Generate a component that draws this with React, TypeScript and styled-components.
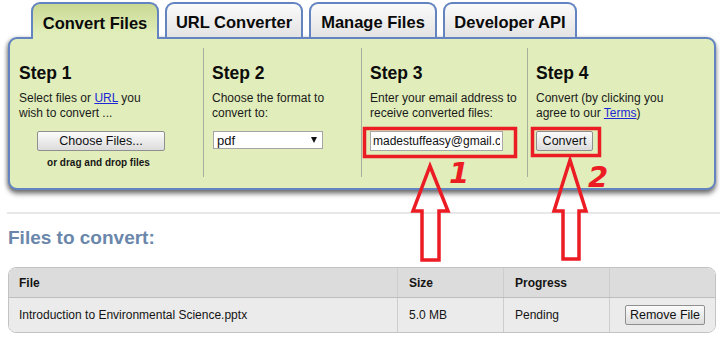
import React from "react";
import styled, { createGlobalStyle } from "styled-components";

const GlobalStyle = createGlobalStyle`
  html, body {
    margin: 0;
    padding: 0;
    background: #ffffff;
  }
  body {
    font-family: "Liberation Sans", Arial, sans-serif;
    color: #111;
  }
`;

const tabs = [
  { label: "Convert Files", width: 128, active: true },
  { label: "URL Converter", width: 138 },
  { label: "Manage Files", width: 128 },
  { label: "Developer API", width: 134 },
];

const App = () => (
  <Page>
    <GlobalStyle />
    <TabBar>
      {tabs.map(t => (
        <Tab key={t.label} $width={t.width} $active={!!t.active}>
          {t.label}
        </Tab>
      ))}
    </TabBar>

    <Panel>
      <Step $first>
        <StepTitle>Step 1</StepTitle>
        <StepText>
          Select files or <Link href="#">URL</Link> you
          <br />
          wish to convert ...
        </StepText>
        <ChooseArea>
          <GreyButton $width={128}>Choose Files...</GreyButton>
          <DropHint>or drag and drop files</DropHint>
        </ChooseArea>
      </Step>

      <Step>
        <StepTitle>Step 2</StepTitle>
        <StepText>
          Choose the format to
          <br />
          convert to:
        </StepText>
        <FormatSelect>
          <span>pdf</span>
          <SelectArrow />
        </FormatSelect>
      </Step>

      <Step>
        <StepTitle>Step 3</StepTitle>
        <StepText>
          Enter your email address to
          <br />
          receive converted files:
        </StepText>
        <EmailInput readOnly value="madestuffeasy@gmail.com" />
      </Step>

      <Step>
        <StepTitle>Step 4</StepTitle>
        <StepText>
          Convert (by clicking you
          <br />
          agree to our <Link href="#">Terms</Link>)
        </StepText>
        <GreyButton $width={57}>Convert</GreyButton>
      </Step>
    </Panel>

    <Rule />

    <SectionTitle>Files to convert:</SectionTitle>

    <FileTable>
      <Row $head>
        <Cell $head>File</Cell>
        <Cell $head>Size</Cell>
        <Cell $head>Progress</Cell>
        <Cell $head />
      </Row>
      <Row>
        <Cell>Introduction to Environmental Science.pptx</Cell>
        <Cell>5.0 MB</Cell>
        <Cell>Pending</Cell>
        <Cell $end>
          <GreyButton $width={80}>Remove File</GreyButton>
        </Cell>
      </Row>
    </FileTable>

    <Annotations width="720" height="345" viewBox="0 0 720 345">
      <g fill="none" stroke="#ec1c24" strokeWidth="3.5" strokeLinejoin="miter">
        <rect x="364.5" y="128.5" width="151" height="28" />
        <rect x="532.5" y="128.5" width="67" height="27" />
        <polygon points="430,166 448,211 439,211 439,260 422,260 422,211 413,211" />
        <polygon points="570,160 586,211 579,211 579,259 563,259 563,211 554,211" />
      </g>
      <HandNumber x="449" y="183">1</HandNumber>
      <HandNumber x="588" y="187">2</HandNumber>
    </Annotations>
  </Page>
);

// Styles

const Page = styled.div`
  position: relative;
  width: 720px;
  height: 345px;
  overflow: hidden;
  padding-left: 8px;
  box-sizing: border-box;
`;

const TabBar = styled.div`
  display: flex;
  align-items: flex-end;
  gap: 6px;
  height: 35px;
  margin-top: 2px;
  padding-left: 23px;
  position: relative;
  z-index: 2;
`;

const Tab = styled.div<{ $width: number; $active: boolean }>`
  box-sizing: border-box;
  width: ${p => p.$width}px;
  height: ${p => (p.$active ? 37 : 35)}px;
  margin-bottom: ${p => (p.$active ? -2 : 0)}px;
  padding-top: ${p => (p.$active ? 4 : 3)}px;
  display: flex;
  align-items: center;
  justify-content: center;
  border: 2px solid #6384c0;
  border-bottom: none;
  border-radius: 9px 9px 0 0;
  background: ${p =>
    p.$active
      ? "linear-gradient(#c9d992, #e1eebb 85%)"
      : "linear-gradient(#fbfbfb, #e3e3e3)"};
  font-size: 16.5px;
  font-weight: bold;
  color: #0a0a0a;
`;

const Panel = styled.div`
  position: relative;
  z-index: 1;
  box-sizing: border-box;
  width: 708px;
  display: grid;
  grid-template-columns: 193px 158px 166px 1fr;
  padding: 9px 0 11px;
  background: #e1eebb;
  border: 2px solid #6384c0;
  border-radius: 9px;
  box-shadow: 0 4px 5px rgba(0, 0, 0, 0.45), -1px 1px 4px rgba(0, 0, 0, 0.3);
`;

const Step = styled.div<{ $first?: boolean }>`
  height: 129px;
  padding-left: 8px;
  border-left: 1px solid ${p => (p.$first ? "transparent" : "#a9ae9c")};
`;

const StepTitle = styled.div`
  margin-top: 15px;
  font-size: 17.5px;
  line-height: 20px;
  font-weight: bold;
  color: #0c0c0c;
`;

const StepText = styled.div`
  margin-top: 8px;
  font-size: 12px;
  line-height: 15px;
  color: #1a1a1a;
  height: 30px;
  margin-bottom: 10px;
`;

const Link = styled.a`
  color: #1d27d6;
  text-decoration: underline;
`;

const ChooseArea = styled.div`
  width: 128px;
  margin-left: 18px;
  display: flex;
  flex-direction: column;
  align-items: center;
`;

const GreyButton = styled.button<{ $width: number }>`
  box-sizing: border-box;
  width: ${p => p.$width}px;
  height: 20px;
  padding: 0;
  font-family: "Liberation Sans", Arial, sans-serif;
  font-size: 12.5px;
  color: #111;
  background: linear-gradient(#fbfbfb, #dcdcdc);
  border: 1px solid #8f8f8f;
  border-radius: 2px;
`;

const DropHint = styled.div`
  margin-top: 6px;
  font-size: 10px;
  line-height: 12px;
  font-weight: bold;
  color: #161616;
  margin-left: -5px;
`;

const FormatSelect = styled.div`
  box-sizing: border-box;
  width: 110px;
  height: 18px;
  margin-left: 1px;
  display: flex;
  align-items: center;
  justify-content: space-between;
  padding: 0 5px 0 3px;
  background: #fff;
  border: 1px solid #a5a5a5;
  font-size: 13px;
`;

const SelectArrow = styled.span`
  width: 0;
  height: 0;
  border-left: 3.5px solid transparent;
  border-right: 3.5px solid transparent;
  border-top: 6px solid #111;
`;

const EmailInput = styled.input`
  box-sizing: border-box;
  width: 133px;
  height: 20px;
  padding: 0 2px;
  font-family: "Liberation Sans", Arial, sans-serif;
  font-size: 12px;
  color: #111;
  background: #fff;
  border: 1px solid #a9a9a9;
  outline: none;
`;

const Rule = styled.div`
  height: 2px;
  margin: 22px 0 0 -1px;
  background: #e8e8e8;
`;

const SectionTitle = styled.h2`
  margin: 14px 0 0;
  font-size: 19px;
  line-height: 20px;
  font-weight: bold;
  color: #6a87ab;
`;

const FileTable = styled.div`
  box-sizing: border-box;
  width: 708px;
  margin-top: 19px;
  border: 1px solid #c3c3c3;
  border-radius: 8px;
  overflow: hidden;
`;

const Row = styled.div<{ $head?: boolean }>`
  display: grid;
  grid-template-columns: 388px 106px 106px 1fr;
  height: ${p => (p.$head ? 30 : 34)}px;
  background: ${p => (p.$head ? "#dcdcdc" : "#ebebeb")};
  border-bottom: ${p => (p.$head ? "1px solid #bdbdbd" : "none")};
  box-sizing: border-box;
`;

const Cell = styled.div<{ $head?: boolean; $end?: boolean }>`
  display: flex;
  align-items: center;
  justify-content: ${p => (p.$end ? "flex-end" : "flex-start")};
  padding: 0 ${p => (p.$end ? 10 : 0)}px 0 ${p => (p.$end ? 0 : 11)}px;
  font-size: 12px;
  font-weight: ${p => (p.$head ? "bold" : "normal")};
  color: #141414;
  & + & {
    border-left: 1px solid #cdcdcd;
  }
  &:first-child {
    padding-left: 10px;
  }
`;

const Annotations = styled.svg`
  position: absolute;
  left: 0;
  top: 0;
  pointer-events: none;
  z-index: 5;
`;

const HandNumber = styled.text`
  fill: #ec1c24;
  font-family: "DejaVu Sans", sans-serif;
  font-style: oblique;
  font-weight: bold;
  font-size: 29px;
`;

// Export

export default App;
